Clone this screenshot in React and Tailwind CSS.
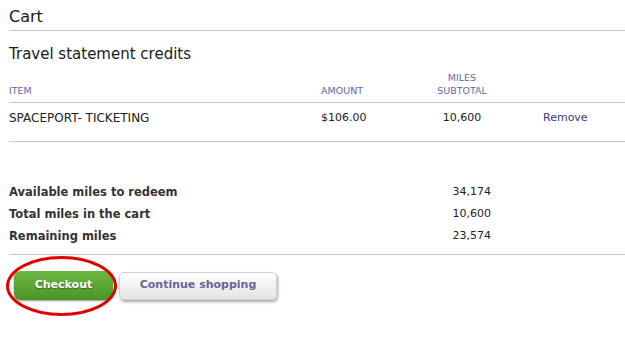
import React from 'react';

const font = { fontFamily: '"DejaVu Sans", Verdana, sans-serif' };

const summary = [
  { label: 'Available miles to redeem', value: '34,174' },
  { label: 'Total miles in the cart', value: '10,600' },
  { label: 'Remaining miles', value: '23,574' },
];

export default function App() {
  return (
    <div className="w-[625px] h-[353px] bg-white pl-[9px] text-[#222]" style={font}>
      {/* Page title */}
      <div className="border-b border-[#c9c6dd] pt-[7px] pb-[4px]">
        <h1 className="text-[16px] leading-[19px] text-[#1a1a1a]">Cart</h1>
      </div>

      <h2 className="mt-[14px] text-[15px] leading-[19px] text-[#1a1a1a]">Travel statement credits</h2>

      {/* Table header */}
      <div className="mt-[7px] flex items-end border-b border-[#c9c6dd] pb-[5px] text-[9.5px] leading-[13px] text-[#6a6598]">
        <div className="w-[312px]">ITEM</div>
        <div className="w-[108px]">AMOUNT</div>
        <div className="w-[66px] text-center">MILES<br />SUBTOTAL</div>
      </div>

      {/* Item row */}
      <div className="flex items-center border-b border-[#c9c6dd] pt-[8px] pb-[16px] text-[11px] leading-[14px]">
        <div className="w-[312px] text-[12px]">SPACEPORT- TICKETING</div>
        <div className="w-[108px]">$106.00</div>
        <div className="w-[66px] text-center">10,600</div>
        <div className="ml-[48px] text-[#3b3a78]">Remove</div>
      </div>

      {/* Miles summary */}
      <div className="mt-[43px] flex flex-col gap-[8px] border-b border-[#c9c6dd] pb-[11px] text-[11px] leading-[14px]">
        {summary.map((row) => (
          <div key={row.label} className="flex">
            <div className="w-[438px] text-[11.5px] font-bold text-[#333]">{row.label}</div>
            <div className="w-[44px] text-right">{row.value}</div>
          </div>
        ))}
      </div>

      {/* Actions */}
      <div className="relative mt-[16px] flex items-center gap-[6px] pl-[5px]">
        <button className="h-[29px] w-[99px] rounded-[6px] bg-gradient-to-b from-[#6cb842] to-[#4b9428] text-[11px] font-bold text-white shadow-[0_1px_2px_rgba(0,0,0,0.4)] [text-shadow:0_1px_1px_rgba(0,0,0,0.4)]">
          Checkout
        </button>
        <button className="h-[28px] w-[158px] rounded-[5px] border border-[#d0d0d0] bg-gradient-to-b from-white to-[#e4e4e4] text-[11px] font-bold text-[#6a6598] shadow-[1px_2px_3px_rgba(0,0,0,0.35)]">
          Continue shopping
        </button>
        {/* annotation ellipse */}
        <div className="pointer-events-none absolute left-[-3px] top-[-15px] h-[60px] w-[111px] rounded-[50%] border-[3px] border-[#e00000]" />
      </div>
    </div>
  );
}
